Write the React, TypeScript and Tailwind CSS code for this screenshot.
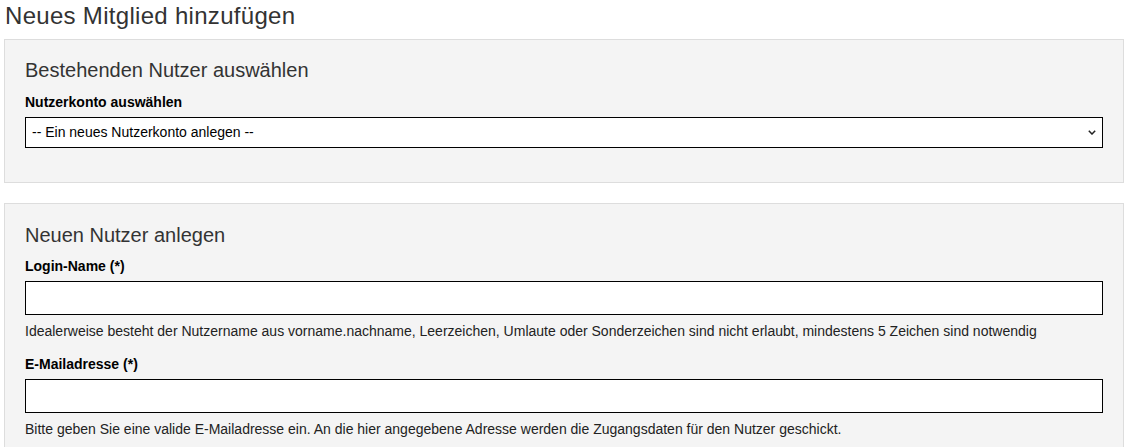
import React from 'react';

const font = { fontFamily: '"Liberation Sans", Arial, sans-serif' };

export default function App() {
  return (
    <div className="min-h-screen bg-white pl-1 pr-[2px] text-black" style={font}>
      <h1 className="pt-[2px] pl-px text-[24px] leading-[28px] tracking-[0.3px] text-[#333]">Neues Mitglied hinzufügen</h1>

      {/* Bestehenden Nutzer */}
      <section className="mt-[9px] border border-[#ddd] bg-[#f4f4f4] px-5 pt-[18px] pb-[34px]">
        <h3 className="text-[20px] leading-6 text-[#333]">Bestehenden Nutzer auswählen</h3>
        <label className="mt-[11px] block text-[14px] font-bold leading-[18px]">Nutzerkonto auswählen</label>
        <div className="relative mt-[6px]">
          <select className="block h-[31px] w-full appearance-none border border-black bg-white pl-[6px] text-[14px] text-black">
            <option>-- Ein neues Nutzerkonto anlegen --</option>
          </select>
          <svg className="pointer-events-none absolute right-[7px] top-[13px]" width="8" height="5" viewBox="0 0 8 5" fill="none">
            <path d="M0.8 0.8 L4 4 L7.2 0.8" stroke="#222" strokeWidth="1.5" />
          </svg>
        </div>
      </section>

      {/* Neuen Nutzer */}
      <section className="mt-5 border border-[#ddd] bg-[#f4f4f4] px-5 pt-[19px] pb-8">
        <h3 className="text-[20px] leading-6 text-[#333]">Neuen Nutzer anlegen</h3>
        <label className="mt-[10px] block text-[14px] font-bold leading-[18px]">Login-Name (*)</label>
        <input type="text" className="mt-[6px] block h-[34px] w-full border border-black bg-white px-[6px] text-[14px]" />
        <p className="mt-[7px] text-[14px] leading-[18px] text-[#222]">
          Idealerweise besteht der Nutzername aus vorname.nachname, Leerzeichen, Umlaute oder Sonderzeichen sind nicht erlaubt, mindestens 5 Zeichen sind notwendig
        </p>
        <label className="mt-[15px] block text-[14px] font-bold leading-[18px]">E-Mailadresse (*)</label>
        <input type="email" className="mt-[6px] block h-[34px] w-full border border-black bg-white px-[6px] text-[14px]" />
        <p className="mt-[7px] text-[14px] leading-[18px] text-[#222]">
          Bitte geben Sie eine valide E-Mailadresse ein. An die hier angegebene Adresse werden die Zugangsdaten für den Nutzer geschickt.
        </p>
      </section>
    </div>
  );
}
